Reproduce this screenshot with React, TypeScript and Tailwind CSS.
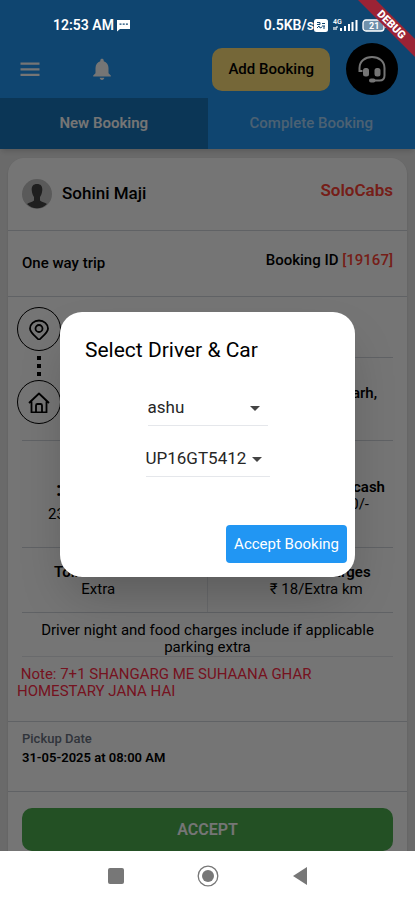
import { useState } from "react";
import type { ReactNode } from "react";

const TABS = ["New Booking", "Complete Booking"];

function StatusBar() {
  return (
    <div className="relative z-30 flex h-12 items-center justify-between pl-[53px] pr-7 pt-[2px] text-sm font-semibold text-white">
      <div className="flex items-center gap-[2px]">
        <span>12:53 AM</span>
        <svg width="15" height="13" viewBox="0 0 15 13" aria-hidden="true">
          <path d="M1 1h13v9H4l-3 2.5z" fill="currentColor" />
          <path d="M3.5 5.2h2m1.2 0h2m1.2 0h2" stroke="#104570" strokeWidth="1.2" />
        </svg>
      </div>
      <div className="flex items-center">
        <span>0.5KB/s</span>
        <svg width="14" height="13" viewBox="0 0 14 13" aria-hidden="true">
          <rect width="14" height="13" rx="2.5" fill="currentColor" />
          <path d="M3 3.5h3v2H3m5-1h3M3 9l2-2 1 2 2-1m2-1v3M8 7h3" fill="none" stroke="#104570" strokeWidth="1" />
        </svg>
        <svg className="ml-1" width="26" height="14" viewBox="0 0 26 14" aria-hidden="true">
          <text x="1" y="6" fontSize="7" fontFamily="Roboto, sans-serif" fill="currentColor">4G</text>
          <path d="M2 9v3m2-3v3m0-3h2" stroke="currentColor" strokeWidth="1.2" />
          <path d="M9 10v3m4-5v5m4-7v7m3.5-9v9m4-11v11" stroke="currentColor" strokeWidth="2" />
        </svg>
        <svg className="ml-1" width="25" height="13" viewBox="0 0 25 13" aria-hidden="true">
          <rect x="1" y="1" width="21" height="11" rx="3" fill="#6f90ab" stroke="currentColor" strokeWidth="1.3" />
          <path d="M24 4v5" stroke="currentColor" strokeWidth="1.5" />
          <text x="7" y="10" fontSize="9" fontWeight="700" fontFamily="Roboto, sans-serif" fill="white">21</text>
        </svg>
      </div>
    </div>
  );
}

function Header() {
  return (
    <header className="flex h-[50px] items-center pb-2 pl-[18px] pr-[17px]">
      <button aria-label="Menu" className="text-white">
        <svg width="24" height="24" viewBox="0 0 24 24" fill="currentColor">
          <path d="M2.5 5.5h19v2.2h-19zM2.5 11.2h19v2.2h-19zM2.5 16.8h19V19h-19z" />
        </svg>
      </button>
      <button aria-label="Notifications" className="ml-12 text-white">
        <svg width="24" height="26" viewBox="0 0 24 26" fill="currentColor">
          <path d="M12 24c1.3 0 2.300-1 2.300-2.200H9.700c0 1.200 1 2.200 2.300 2.200zm6.500-6.800v-5.200c0-3.400-1.800-6-4.800-6.800v-.8c0-1-.7-1.700-1.700-1.700s-1.700.7-1.700 1.700v.8c-3 .8-4.800 3.400-4.800 6.800v5.200l-2.300 2.300v1h17.600v-1z" />
        </svg>
      </button>
      <button className="ml-auto h-[43px] rounded-[10px] bg-[#ffe07a] px-4 text-[15px] font-medium text-black">
        Add Booking
      </button>
      <button aria-label="Support" className="ml-4 flex size-[52px] items-center justify-center rounded-full bg-black text-white">
        <svg width="28" height="28" viewBox="0 0 28 28" fill="none" stroke="currentColor" strokeWidth="2">
          <path d="M4.500 16H1.500v-3C1.500 6.500 7 2 14 2s12.500 4.500 12.500 11v7.500c0 3-2 5-5 5H15" />
          <rect x="5" y="13" width="6" height="8.5" rx="2.5" fill="currentColor" stroke="none" />
          <rect x="16.5" y="13" width="6" height="8.5" rx="2.5" fill="currentColor" stroke="none" />
          <rect x="11" y="23.5" width="6.5" height="4" rx="2" fill="currentColor" stroke="none" />
        </svg>
      </button>
    </header>
  );
}

function Tabs() {
  return (
    <nav className="grid h-[51px] grid-cols-2 text-[15px]">
      {TABS.map((tab, i) => (
        <button
          key={tab}
          className={i === 0 ? "bg-[#1976bb] font-semibold text-white" : "font-medium text-white/60"}
        >
          {tab}
        </button>
      ))}
    </nav>
  );
}

function StopIcon({ children }: { children: ReactNode }) {
  return (
    <div className="flex size-11 items-center justify-center rounded-full border border-black">
      <svg width="22" height="22" viewBox="0 0 22 22" fill="none" stroke="black" strokeWidth="1.8" strokeLinejoin="round">
        {children}
      </svg>
    </div>
  );
}

function Route() {
  return (
    <div className="flex pl-[9px] pr-[14px] pt-[10px]">
      <div className="flex flex-col items-center">
        <StopIcon>
          <path d="M11 22C8 18.500 2 15 2 10.500a9 8 0 0 1 18 0C20 15 14 18.500 11 22z" />
          <circle cx="11" cy="10.5" r="3.5" />
        </StopIcon>
        <div className="flex h-[29px] flex-col items-center justify-center gap-1">
          <span className="size-1 bg-black" />
          <span className="size-1 bg-black" />
          <span className="size-1 bg-black" />
        </div>
        <StopIcon>
          <path d="M1 12L11 2.500 21 12M3.500 10.500V21.500h15V10.500M8 21.500v-7q0-1.500 1.500-1.500h3q1.500 0 1.500 1.500v7" />
        </StopIcon>
      </div>
      <div className="flex-1 pl-3 text-right text-[15px] font-medium">
        <div className="h-[51px] border-b border-gray-300" />
        <p className="pr-4 pt-6">Chandigarh,</p>
      </div>
    </div>
  );
}

function BookingCard() {
  return (
    <article className="mx-2 mt-[9px] rounded-t-2xl bg-white text-black shadow-sm">
      <div className="flex h-[73px] items-center border-b border-gray-300 px-[14px]">
        <svg width="30" height="30" viewBox="0 0 30 30" aria-hidden="true">
          <circle cx="15" cy="15" r="15" fill="#c4c4c4" />
          <path d="M15 5c4 0 5.500 2.500 5.300 6-.2 3.500-1.300 5.500-2.300 7v3.500c1.500 1.800 5 2 7 3.500a14 14 0 0 1-20 0c2-1.500 5.500-1.700 7-3.500V18c-1-1.500-2.100-3.500-2.300-7C9.500 7.500 11 5 15 5z" fill="#444" />
        </svg>
        <span className="ml-[10px] text-[17px] font-medium">Sohini Maji</span>
        <span className="mb-[6px] ml-auto text-[17px] font-semibold text-[#ff4336]">SoloCabs</span>
      </div>
      <div className="flex h-[66px] items-center justify-between border-b border-gray-300 px-[14px] text-[15px] font-medium">
        <span>One way trip</span>
        <span className="mb-[6px]">
          Booking ID <span className="text-[#ff4336]">[19167]</span>
        </span>
      </div>
      <Route />
      <div className="mx-[14px] mt-4 grid h-[108px] grid-cols-2 border-y border-gray-300 pt-9 text-[15px]">
        <div>
          <p className="pl-[34px] text-xl leading-6 font-bold">:</p>
          <p className="pl-[26px] pt-[2px]">232 Km</p>
        </div>
        <div className="pt-[2px] text-right leading-[17px]">
          <p className="pr-2 font-semibold">Driver cash</p>
          <p className="pr-6">₹ 4000/-</p>
        </div>
      </div>
      <div className="mx-[14px] grid h-[65px] grid-cols-2 border-b border-gray-300 pt-4 text-center text-[15px] leading-[17px]">
        <div className="border-r border-gray-200 pr-8">
          <p className="font-semibold">Tolls &amp; Taxes</p>
          <p>Extra</p>
        </div>
        <div className="pl-8">
          <p className="font-semibold">Per Km Charges</p>
          <p>₹ 18/Extra km</p>
        </div>
      </div>
      <p className="mx-[14px] border-b border-gray-200 px-4 pt-[9px] text-center text-[15px] leading-[17px]">
        Driver night and food charges include if applicable parking extra
      </p>
      <p className="pb-[21px] pl-[9px] pr-16 pt-[9px] text-[15px] leading-[17px] text-[#ff2a46]">
        &nbsp;Note: 7+1 SHANGARG ME SUHAANA GHAR HOMESTARY JANA HAI
      </p>
      <div className="border-y border-gray-300 px-[14px] pb-6 pt-[7px] text-[13px] leading-[19px]">
        <p className="font-medium text-gray-500">Pickup Date</p>
        <p className="font-semibold">31-05-2025 at 08:00 AM</p>
      </div>
      <div className="px-[14px] pt-4">
        <button className="block h-[43px] w-full rounded-[10px] bg-[#4caf50] text-base font-semibold text-white">ACCEPT</button>
      </div>
    </article>
  );
}

type FieldProps = {
  label: string;
  options: string[];
  value: string;
  onChange: (value: string) => void;
};

function SelectField({ label, options, value, onChange }: FieldProps) {
  return (
    <div className="relative border-b border-gray-200">
      <select
        aria-label={label}
        value={value}
        onChange={(e) => onChange(e.target.value)}
        className="block h-[34px] w-full appearance-none bg-transparent pr-5 text-[17px] text-neutral-800 outline-none"
      >
        {options.map((option) => (
          <option key={option}>{option}</option>
        ))}
      </select>
      <svg className="pointer-events-none absolute right-2 top-[15px]" width="10" height="5" viewBox="0 0 10 5">
        <path d="M0 0h10L5 5z" fill="#444" />
      </svg>
    </div>
  );
}

function DriverDialog() {
  const [driver, setDriver] = useState("ashu");
  const [car, setCar] = useState("UP16GT5412");

  return (
    <div role="dialog" aria-labelledby="dialog-title" className="w-full rounded-[22px] bg-white px-2 pb-[14px] pt-6 shadow-2xl">
      <h2 id="dialog-title" className="pl-[17px] text-[21px] leading-7 text-black">Select Driver &amp; Car</h2>
      <div className="mx-auto mt-[27px] flex w-[124px] flex-col gap-4">
        <div className="px-[2px]">
          <SelectField label="Driver" options={["ashu"]} value={driver} onChange={setDriver} />
        </div>
        <SelectField label="Car" options={["UP16GT5412"]} value={car} onChange={setCar} />
      </div>
      <div className="mt-12 flex justify-end">
        <button className="h-[38px] rounded bg-[#2196f3] px-2 text-[15px] text-white">Accept Booking</button>
      </div>
    </div>
  );
}

function NavigationBar() {
  return (
    <footer className="relative z-30 flex h-[49px] items-center justify-center gap-[70px] bg-white text-[#777]">
      <button aria-label="Recent apps">
        <svg width="22" height="22" viewBox="0 0 22 22"><rect x="3" y="3" width="16" height="16" rx="2" fill="currentColor" /></svg>
      </button>
      <button aria-label="Home">
        <svg width="22" height="22" viewBox="0 0 22 22">
          <circle cx="11" cy="11" r="9.8" fill="none" stroke="currentColor" strokeWidth="1.3" />
          <circle cx="11" cy="11" r="6" fill="currentColor" />
        </svg>
      </button>
      <button aria-label="Back">
        <svg width="22" height="22" viewBox="0 0 22 22"><path d="M18 2v18L4 11z" fill="currentColor" /></svg>
      </button>
    </footer>
  );
}

export default function App() {
  return (
    <div className="relative flex min-h-screen flex-col overflow-hidden bg-[#e8e8e8] font-[Roboto,sans-serif]">
      <div className="bg-[#2196f3] shadow-md">
        <StatusBar />
        <Header />
        <Tabs />
      </div>
      <main className="flex-1">
        <BookingCard />
      </main>
      <NavigationBar />
      <div className="absolute inset-0 z-20 flex items-center justify-center bg-black/54 px-[60px] pb-[11px]">
        <DriverDialog />
      </div>
      <svg className="absolute right-0 top-0 z-40" width="60" height="60" viewBox="0 0 60 60" aria-hidden="true">
        <path d="M3 0h18l39 39v18z" fill="#9b2335" />
        <text x="36" y="25" fontSize="11" fontWeight="900" fontFamily="Roboto, sans-serif" fill="white" textAnchor="middle" dominantBaseline="middle" transform="rotate(45 36 25)">
          DEBUG
        </text>
      </svg>
    </div>
  );
}
